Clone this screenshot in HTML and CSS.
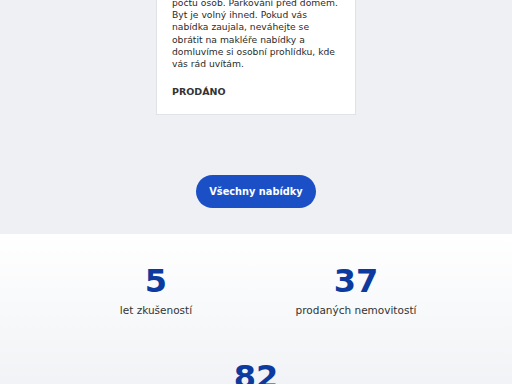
FILE: index.html
```html
<!DOCTYPE html>
<html lang="cs">
<head>
<meta charset="utf-8">
<link rel="stylesheet" href="styles.css">
</head>
<body>
<section class="offers">
  <article class="card">
    <p class="desc">počtu osob. Parkování před domem. Byt je volný ihned. Pokud vás nabídka zaujala, neváhejte se obrátit na makléře nabídky a domluvíme si osobní prohlídku, kde vás rád uvítám.</p>
    <p class="status">PRODÁNO</p>
  </article>
  <a class="btn" href="#">Všechny nabídky</a>
</section>
<section class="stats">
  <div class="stat"><div class="num">5</div><div class="label">let zkušeností</div></div>
  <div class="stat"><div class="num">37</div><div class="label">prodaných nemovitostí</div></div>
  <div class="stat wide"><div class="num">82</div><div class="label">spokojených klientů</div></div>
</section>
</body>
</html>
```

FILE: styles.css
```css
html, body { margin: 0; padding: 0; }
body {
  font-family: "DejaVu Sans", "Noto Sans", sans-serif;
  color: #333;
  background: #fff;
}
.offers {
  background: #eef0f4;
  display: flex;
  flex-direction: column;
  align-items: center;
  padding-bottom: 26px;
}
.card {
  width: 200px;
  box-sizing: border-box;
  background: #fff;
  border: 1px solid #dfe2e7;
  padding: 15px 15px 16px;
  margin-top: -19px;
}
.desc {
  margin: 0;
  font-size: 9.2px;
  line-height: 12.2px;
  color: #2b2b2b;
}
.status {
  margin: 16px 0 0;
  font-size: 9.5px;
  font-weight: bold;
  line-height: 12px;
  color: #333;
}
.btn {
  margin-top: 60px;
  width: 120px;
  height: 33px;
  border-radius: 17px;
  background: #1a4fc6;
  color: #fff;
  text-decoration: none;
  font-weight: bold;
  font-size: 9.8px;
  display: flex;
  align-items: center;
  justify-content: center;
}
.stats {
  background: linear-gradient(#ffffff, #f1f3f6 150px);
  display: grid;
  grid-template-columns: 200px 200px;
  justify-content: center;
  row-gap: 37px;
  padding-top: 25px;
  padding-bottom: 40px;
}
.stat { text-align: center; }
.stat.wide { grid-column: 1 / span 2; }
.num {
  font-size: 32px;
  font-weight: bold;
  line-height: 44px;
  color: #0d3a9e;
}
.label {
  font-size: 10.5px;
  line-height: 16px;
  color: #333;
  margin-top: -1px;
}
```
